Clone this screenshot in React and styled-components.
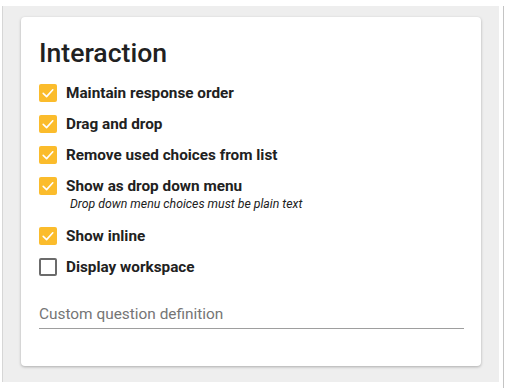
import styled, { createGlobalStyle } from "styled-components";

const GlobalStyle = createGlobalStyle`
  html, body {
    margin: 0;
    padding: 0;
    background: #ffffff;
    font-family: Roboto, "Liberation Sans", sans-serif;
  }
`;

const options = [
  { label: "Maintain response order", checked: true },
  { label: "Drag and drop", checked: true },
  { label: "Remove used choices from list", checked: true },
  {
    label: "Show as drop down menu",
    checked: true,
    hint: "Drop down menu choices must be plain text",
  },
  { label: "Show inline", checked: true },
  { label: "Display workspace", checked: false },
];

const Frame = styled.div`
  width: 503px;
  height: 384px;
  border-right: 1px solid #c4c4c4;
  border-bottom: 1px solid #8c8c8c;
  background: #ffffff;
`;

const Screen = styled.div`
  box-sizing: border-box;
  margin: 6px 0 0 2px;
  width: 497px;
  height: 376px;
  border-left: 1px solid #d6d6d6;
  background: #eeeeee;
  padding: 11px 18px;
`;

const Card = styled.div`
  box-sizing: border-box;
  width: 460px;
  height: 349px;
  background: #ffffff;
  border-radius: 4px;
  box-shadow: 0 1px 3px rgba(0, 0, 0, 0.28);
  padding: 20px 17px 0 18px;
`;

const Title = styled.h2`
  margin: 0 0 8px;
  font-size: 26.6px;
  line-height: 32px;
  font-weight: 500;
  color: #212121;
`;

const List = styled.div`
  display: flex;
  flex-direction: column;
`;

const Row = styled.label`
  display: flex;
  align-items: center;
  gap: 9px;
  height: 31px;
`;

const Box = styled.span`
  box-sizing: border-box;
  width: 18px;
  height: 18px;
  border-radius: 2px;
  display: flex;
  align-items: center;
  justify-content: center;
  background: ${(p) => (p.$checked ? "#fbbc2c" : "#ffffff")};
  border: ${(p) => (p.$checked ? "none" : "2px solid #6b6b6b")};
`;

const Label = styled.span`
  font-size: 15.3px;
  font-weight: 700;
  color: #212121;
`;

const Hint = styled.div`
  margin: -4px 0 9px 31px;
  font-size: 12.3px;
  line-height: 14px;
  font-style: italic;
  color: #212121;
`;

const Field = styled.div`
  margin-top: 17px;
  height: 30px;
  display: flex;
  align-items: center;
  box-sizing: border-box;
  border-bottom: 1px solid #9e9e9e;
  font-size: 15.4px;
  color: #757575;
`;

const Check = () => (
  <svg width="18" height="18" viewBox="0 0 18 18">
    <path
      d="M4.2 9.4 L7.6 12.6 L13.8 5.8"
      fill="none"
      stroke="#ffffff"
      strokeWidth="1.6"
      strokeLinecap="round"
      strokeLinejoin="round"
    />
  </svg>
);

export default function App() {
  return (
    <Frame>
      <GlobalStyle />
      <Screen>
        <Card>
          <Title>Interaction</Title>
          <List>
            {options.map((o) => (
              <div key={o.label}>
                <Row>
                  <Box $checked={o.checked}>{o.checked && <Check />}</Box>
                  <Label>{o.label}</Label>
                </Row>
                {o.hint && <Hint>{o.hint}</Hint>}
              </div>
            ))}
          </List>
          <Field>Custom question definition</Field>
        </Card>
      </Screen>
    </Frame>
  );
}
